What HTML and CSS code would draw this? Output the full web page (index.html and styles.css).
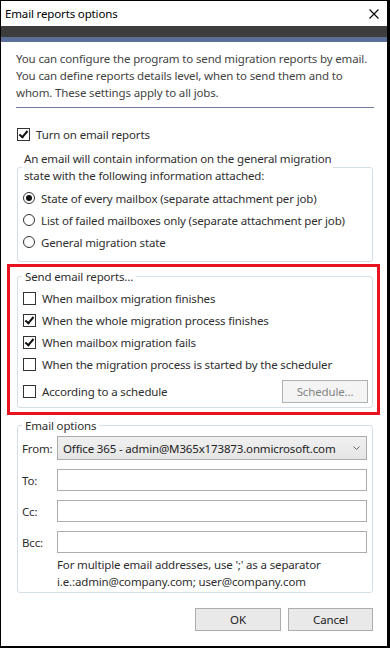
FILE: index.html
```html
<!DOCTYPE html>
<html lang="en">
<head>
    <meta charset="UTF-8">
    <meta name="viewport" content="width=device-width, initial-scale=1.0">
    <title>Email reports options</title>
    <link rel="stylesheet" href="styles.css">
</head>
<body>
    <div class="window">
        <header class="titlebar">
            <span class="title">Email reports options</span>
            <svg class="close" width="10" height="10" viewBox="0 0 10 10">
                <path d="M0.5 0.5 L9.5 9.5 M9.5 0.5 L0.5 9.5" stroke="#000" stroke-width="1.1" fill="none"/>
            </svg>
        </header>
        <div class="band-dark"></div>
        <div class="band-blue"></div>

        <main class="content">
            <p class="intro">You can configure the program to send migration reports by email.<br>You can define reports details level, when to send them and to<br>whom. These settings apply to all jobs.</p>
            <hr class="sep">

            <label class="check main-check">
                <span class="box checked"></span>Turn on email reports
            </label>

            <fieldset class="group info-group">
                <legend>An email will contain information on the general migration<br>state with the following information attached:</legend>
                <div class="rows">
                    <label class="radio"><span class="dot checked"></span>State of every mailbox (separate attachment per job)</label>
                    <label class="radio"><span class="dot"></span>List of failed mailboxes only (separate attachment per job)</label>
                    <label class="radio"><span class="dot"></span>General migration state</label>
                </div>
            </fieldset>

            <div class="highlight">
                <fieldset class="group send-group">
                    <legend>Send email reports...</legend>
                    <div class="rows">
                        <label class="check"><span class="box"></span>When mailbox migration finishes</label>
                        <label class="check"><span class="box checked"></span>When the whole migration process finishes</label>
                        <label class="check"><span class="box checked"></span>When mailbox migration fails</label>
                        <label class="check"><span class="box"></span>When the migration process is started by the scheduler</label>
                        <div class="schedule-row">
                            <label class="check"><span class="box"></span>According to a schedule</label>
                            <button class="btn btn-disabled" disabled>Schedule...</button>
                        </div>
                    </div>
                </fieldset>
            </div>

            <fieldset class="group email-group">
                <legend>Email options</legend>
                <div class="field from-field">
                    <span class="lbl">From:</span>
                    <div class="select">
                        <span>Office 365 - admin@M365x173873.onmicrosoft.com</span>
                        <svg width="7" height="4" viewBox="0 0 7 4">
                            <path d="M0.5 0.5 L3.5 3.5 L6.5 0.5" stroke="#666" stroke-width="1" fill="none"/>
                        </svg>
                    </div>
                </div>
                <div class="field">
                    <span class="lbl">To:</span>
                    <div class="input"></div>
                </div>
                <div class="field">
                    <span class="lbl">Cc:</span>
                    <div class="input"></div>
                </div>
                <div class="field">
                    <span class="lbl">Bcc:</span>
                    <div class="input"></div>
                </div>
                <p class="hint">For multiple email addresses, use ';' as a separator<br>i.e.:admin@company.com; user@company.com</p>
            </fieldset>

            <div class="actions">
                <button class="btn">OK</button>
                <button class="btn btn-cancel">Cancel</button>
            </div>
        </main>
    </div>
</body>
</html>
```

FILE: styles.css
```css
body {
    margin: 0;
    font-family: "Noto Sans", "Open Sans", sans-serif;
    font-size: 11.5px;
    letter-spacing: -0.15px;
    color: #2e2e2e;
    background: #fff;
}
.window {
    width: 390px;
    height: 648px;
    box-sizing: border-box;
    border: 1px solid #000;
    border-right-width: 3px;
    border-bottom-width: 2px;
    display: flex;
    flex-direction: column;
    background: #fff;
}
.titlebar {
    height: 25px;
    display: flex;
    align-items: center;
    justify-content: space-between;
    padding: 0 8px 0 4px;
    color: #000;
}
.band-dark {
    height: 11px;
    background: #3d3d3d;
}
.band-blue {
    height: 5px;
    background: #5b6f99;
}
.content {
    padding: 8px 13px 0 15px;
}
.intro {
    margin: 0;
    line-height: 17px;
    color: #444;
    white-space: nowrap;
}
.sep {
    margin: 6px 0 0;
    border: 0;
    height: 1px;
    background: #6b7ea6;
}

/* checkboxes and radios */
.check,
.radio {
    display: flex;
    align-items: center;
    height: 22px;
    margin-left: 1px;
    white-space: nowrap;
}
.box {
    width: 11px;
    height: 11px;
    border: 1px solid #333;
    background: #fff;
    margin-right: 6px;
    flex-shrink: 0;
    position: relative;
}
.box.checked::after {
    content: "";
    position: absolute;
    left: 3px;
    top: 0px;
    width: 3px;
    height: 7px;
    border: solid #111;
    border-width: 0 2px 2px 0;
    transform: rotate(40deg);
}
.dot {
    width: 10px;
    height: 10px;
    border: 1px solid #333;
    border-radius: 50%;
    margin-right: 6px;
    flex-shrink: 0;
    position: relative;
}
.dot.checked::after {
    content: "";
    position: absolute;
    left: 2px;
    top: 2px;
    width: 6px;
    height: 6px;
    border-radius: 50%;
    background: #111;
}
.main-check {
    margin-top: 15px;
}

/* group boxes */
.group {
    margin: 0 1px;
    padding: 0 5px 0 4px;
    border: 1px solid #d5dfe5;
    border-radius: 3px;
    min-width: 0;
}
.group legend {
    padding: 0 3px;
    line-height: 17px;
    white-space: nowrap;
}
.info-group {
    margin-top: 5px;
    padding-bottom: 8px;
}
.info-group legend {
    padding: 0 2px 0 2px;
}
.info-group .rows {
    margin-top: 3px;
}
.highlight {
    margin: 2px -6px 0 -9px;
    border: 3px solid #e8131e;
    padding: 1px 4px 4px 7px;
}
.send-group {
    margin: 0;
    padding-right: 4px;
    padding-bottom: 3px;
}
.send-group .rows {
    margin-top: 2px;
}
.schedule-row {
    display: flex;
    align-items: center;
    justify-content: space-between;
    height: 26px;
    margin-top: 3px;
}
.email-group {
    margin-top: 2px;
    padding-bottom: 2px;
}
.field {
    display: flex;
    align-items: center;
    margin-top: 9px;
}
.from-field {
    margin-top: 2px;
}
.lbl {
    width: 35px;
    flex-shrink: 0;
}
.select {
    flex: 1;
    height: 22px;
    border: 1px solid #acacac;
    background: linear-gradient(#f0f0f0, #e5e5e5);
    display: flex;
    align-items: center;
    justify-content: space-between;
    padding: 0 6px 0 5px;
    color: #222;
    white-space: nowrap;
}
.input {
    flex: 1;
    height: 20px;
    border: 1px solid #abadb3;
    background: #fff;
}
.hint {
    margin: 3px 0 0 35px;
    line-height: 17px;
}

/* buttons */
.btn {
    font-family: inherit;
    font-size: 11.5px;
    letter-spacing: -0.15px;
    color: #222;
    width: 86px;
    height: 23px;
    padding: 0;
    border: 1px solid #adadad;
    background: #e9e9e9;
}
.btn-disabled {
    color: #838383;
    background: #f4f4f4;
    border-color: #adb2b5;
}
.btn-cancel {
    width: 85px;
}
.actions {
    display: flex;
    justify-content: flex-end;
    gap: 7px;
    margin-top: 15px;
    padding-right: 1px;
}
```
